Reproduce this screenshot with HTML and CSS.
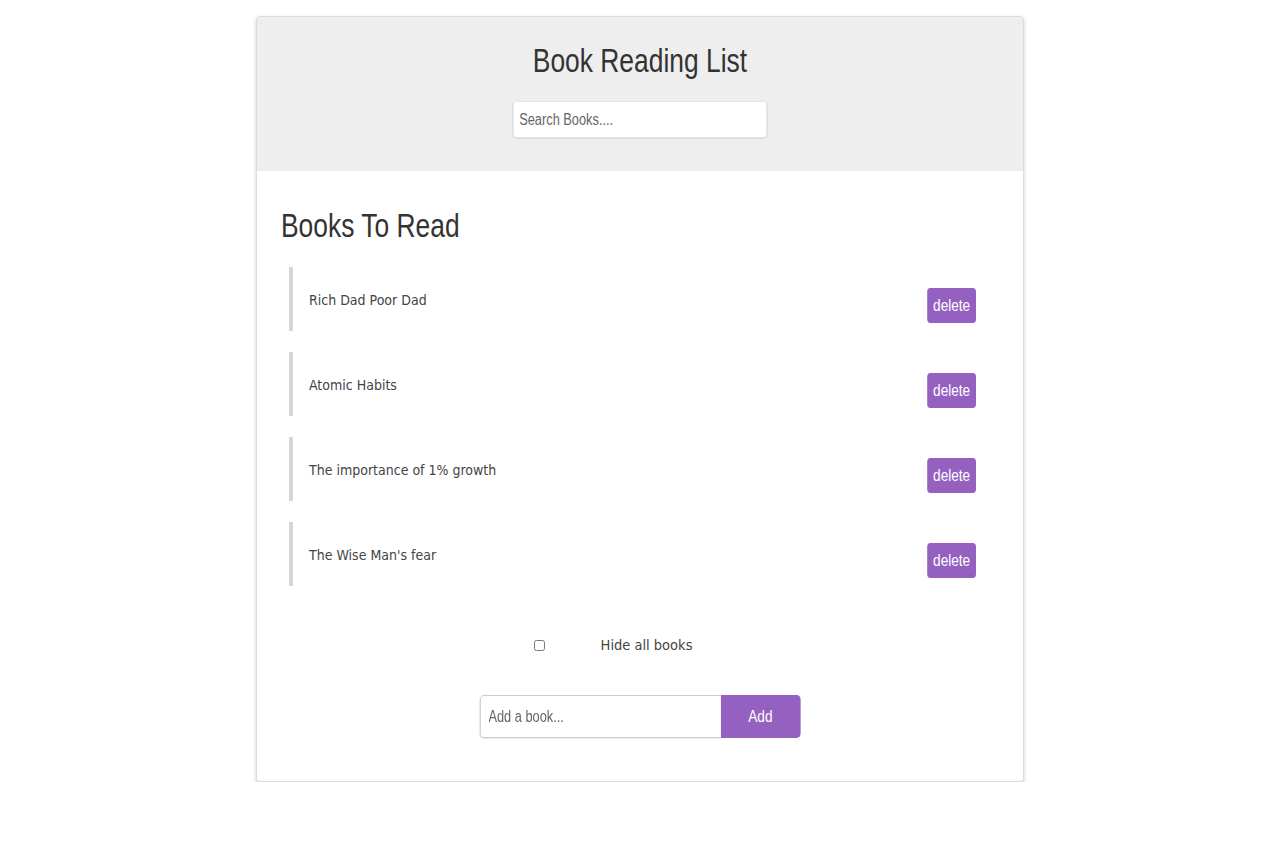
FILE: index.html
```html
<!DOCTYPE html>
<html lang="en">
<head>
<meta charset="utf-8">
<title>Book Reading List</title>
<link rel="stylesheet" href="styles.css">
</head>
<body>
<div class="card">
  <header class="header">
    <h1 class="title">Book Reading List</h1>
    <input class="search" type="text" placeholder="Search Books....">
  </header>
  <section class="content">
    <h2 class="subtitle">Books To Read</h2>
    <ul class="list">
      <li class="item"><span class="name">Rich Dad Poor Dad</span><button class="delete">delete</button></li>
      <li class="item"><span class="name">Atomic Habits</span><button class="delete">delete</button></li>
      <li class="item"><span class="name">The importance of 1% growth</span><button class="delete">delete</button></li>
      <li class="item"><span class="name">The Wise Man's fear</span><button class="delete">delete</button></li>
    </ul>
    <div class="hide-row">
      <input class="check" type="checkbox" id="hide">
      <label class="hide-label" for="hide">Hide all books</label>
    </div>
    <form class="add-form">
      <input class="add-input" type="text" placeholder="Add a book...">
      <button class="add-btn" type="button">Add</button>
    </form>
  </section>
</div>
</body>
</html>
```
FILE: styles.css
```css
* { box-sizing: border-box; }
body {
  margin: 0;
  background: #fff;
  font-family: "DejaVu Sans Condensed", "DejaVu Sans", sans-serif;
  color: #444;
}
.card {
  width: 768px;
  margin: 16px auto 0;
  border: 1px solid #dcdcdc;
  border-radius: 4px;
  box-shadow: 0 2px 4px rgba(0,0,0,0.18);
  overflow: hidden;
  background: #fff;
}
.header {
  background: #eeeeee;
  padding: 25px 0 33px;
  display: flex;
  flex-direction: column;
  align-items: center;
}
.title {
  margin: 0 0 22px;
  font-family: "Liberation Sans", Arial, sans-serif;
  font-weight: normal;
  font-size: 33px;
  line-height: 37px;
  color: #333;
  transform: scaleX(0.8);
  transform-origin: center;
}
.search {
  width: 318px;
  height: 37px;
  border: 1px solid #e2e2e2;
  border-radius: 5px;
  background: #fff;
  padding: 0 7px;
  font-family: "Liberation Sans", Arial, sans-serif;
  font-size: 16px;
  color: #555;
  outline: none;
  box-shadow: 0 1px 1px rgba(0,0,0,0.08);
  transform: scaleX(0.8);
  transform-origin: center;
}
.search::placeholder, .add-input::placeholder { color: #666; }
.content {
  padding: 36px 24px 43px;
}
.subtitle {
  margin: 0 0 23px;
  font-family: "Liberation Sans", Arial, sans-serif;
  font-weight: normal;
  font-size: 33px;
  line-height: 37px;
  color: #333;
  transform: scaleX(0.8);
  transform-origin: left center;
}
.list {
  list-style: none;
  margin: 0 23px 0 8px;
  padding: 0;
  display: flex;
  flex-direction: column;
  gap: 21px;
}
.item {
  height: 64px;
  border-left: 4px solid #d6d6d6;
  padding-left: 16px;
  display: flex;
  align-items: center;
  justify-content: space-between;
}
.name {
  font-size: 14px;
  padding-top: 2px;
  color: #444;
}
.delete {
  margin-top: 13px;
  width: 61px;
  height: 35px;
  border: none;
  border-radius: 4px;
  background: #9561c1;
  color: #fff;
  font-family: "Liberation Sans", Arial, sans-serif;
  font-size: 17px;
  padding: 0;
  transform: scaleX(0.8);
  transform-origin: right center;
}
.hide-row {
  margin-top: 49px;
  height: 20px;
  display: flex;
  align-items: center;
  justify-content: center;
  padding-right: 54px;
}
.check {
  width: 11px;
  height: 11px;
  margin: 0 56px 0 0;
}
.hide-label {
  font-size: 14.5px;
  color: #444;
}
.add-form {
  margin-top: 40px;
  display: flex;
  justify-content: center;
  transform: scaleX(0.8);
  transform-origin: center;
}
.add-input {
  width: 301px;
  height: 43px;
  border: 1px solid #cccccc;
  border-right: none;
  border-radius: 5px 0 0 5px;
  padding: 0 10px;
  font-family: "Liberation Sans", Arial, sans-serif;
  font-size: 16px;
  color: #555;
  outline: none;
  box-shadow: 0 1px 1px rgba(0,0,0,0.08);
}
.add-btn {
  width: 100px;
  height: 43px;
  border: none;
  border-radius: 0 5px 5px 0;
  background: #9561c1;
  color: #fff;
  font-family: "Liberation Sans", Arial, sans-serif;
  font-size: 17px;
}
```
